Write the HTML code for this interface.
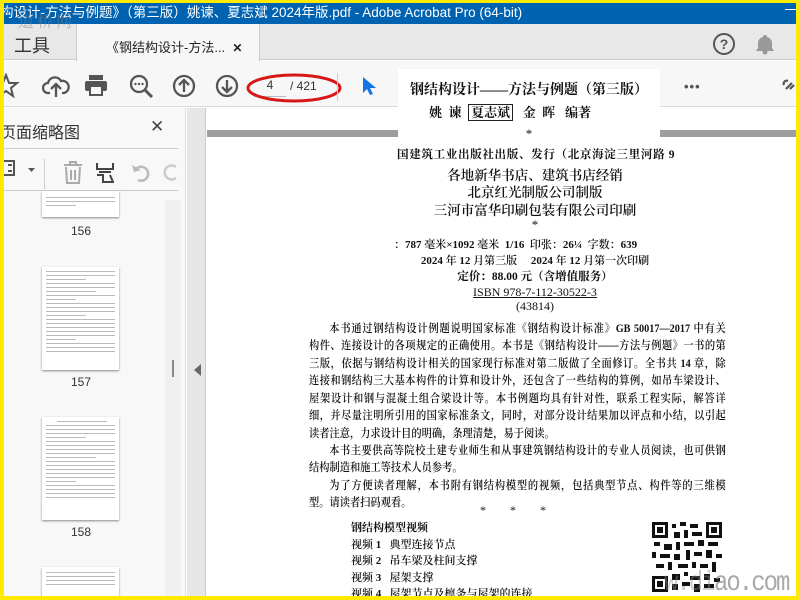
<!DOCTYPE html>
<html><head><meta charset="utf-8"><style>
*{margin:0;padding:0;box-sizing:border-box}
body{width:800px;height:600px;overflow:hidden;background:#ffeb00;position:relative;font-family:"Liberation Sans","Noto Sans CJK SC",sans-serif}
.a{position:absolute}
.ser{font-family:"Liberation Serif","Noto Serif CJK SC",serif;color:#111}
.c{text-align:center;white-space:nowrap}
.pl{position:absolute;left:305px;width:472px;font-size:11.6px;text-align:justify;text-align-last:justify;white-space:nowrap;line-height:16px;font-weight:600;transform:scaleX(0.883);transform-origin:0 0}
.pl.e{text-align-last:auto;text-align:left}
.vl{position:absolute;left:347px;font-size:11px;white-space:pre;font-weight:600}
.th{position:absolute;left:38px;width:77px;background:#fff;box-shadow:0 1px 2px #888}
.th i{display:block;height:1px;background:#bbb;margin:3px 4px}
.lab{position:absolute;left:60px;width:34px;text-align:center;font-size:12px;color:#333}
</style></head><body>
<div class="a" style="left:4px;top:3px;width:792px;height:593px;background:#fff;overflow:hidden">
 <div class="a" style="left:0;top:0;width:792px;height:21px;background:#0063b1;color:#fff;font-size:13.5px;line-height:20px;white-space:nowrap"><span style="margin-left:-4px">构设计-方法与例题》（第三版）姚谏、夏志斌 2024年版.pdf - Adobe Acrobat Pro (64-bit)</span></div>
 <div class="a" style="left:781px;top:6px;width:11px;height:1px;background:#fff"></div>
 <div class="a" style="left:0;top:21px;width:792px;height:36px;background:#e8e8e8;border-bottom:1px solid #ccc"></div>
 <div class="a" style="left:14px;top:6px;color:rgba(130,130,130,.5);font-size:16px;letter-spacing:3px;font-family:'Noto Serif CJK SC',serif">道桥网</div>
 <div class="a" style="left:10px;top:29px;font-size:18px;color:#333">工具</div>
 <div class="a" style="left:72px;top:21px;width:184px;height:37px;background:#f7f7f7;border-left:1px solid #ccc;border-right:1px solid #ccc"></div>
 <div class="a" style="left:102px;top:34px;font-size:13px;color:#222;white-space:nowrap">《钢结构设计-方法...&nbsp;&nbsp;<b style="font-size:12px">✕</b></div>
 <svg class="a" style="left:708px;top:29px" width="24" height="24"><circle cx="12" cy="12" r="10" fill="none" stroke="#555" stroke-width="2"/><text x="12" y="17" font-size="14" font-weight="bold" text-anchor="middle" fill="#555" font-family="Liberation Sans">?</text></svg>
 <svg class="a" style="left:751px;top:30px" width="20" height="22"><path d="M10 2a2 2 0 0 1 2 2 6 6 0 0 1 5 6v5l2 3H1l2-3v-5a6 6 0 0 1 5-6 2 2 0 0 1 2-2z" fill="#999"/><circle cx="10" cy="19" r="2.5" fill="#999"/></svg>
 <div class="a" style="left:0;top:58px;width:792px;height:46px;background:#f7f7f7;border-bottom:1px solid #d8d8d8"></div>
 <svg class="a" style="left:-8px;top:70px" width="30" height="28"><path d="M10 2l3 8h8l-6 5 2 8-7-5-7 5 2-8-6-5h8z" fill="none" stroke="#555" stroke-width="2"/></svg>
 <svg class="a" style="left:38px;top:70px" width="28" height="26"><path d="M8 20H6a5 5 0 0 1 0-10 7 7 0 0 1 13-2 6 6 0 0 1 3 12h-2M14 24V12M9 16l5-5 5 5" fill="none" stroke="#555" stroke-width="2.3"/></svg>
 <svg class="a" style="left:80px;top:71px" width="24" height="22"><rect x="5" y="1" width="14" height="5" fill="#555"/><rect x="1" y="7" width="22" height="10" rx="2" fill="#555"/><rect x="6" y="12" width="12" height="9" fill="#f7f7f7" stroke="#555" stroke-width="2"/></svg>
 <svg class="a" style="left:124px;top:70px" width="26" height="26"><circle cx="11" cy="11" r="8" fill="none" stroke="#555" stroke-width="2.3"/><path d="M17 17l7 7" stroke="#555" stroke-width="3"/><circle cx="7.5" cy="11" r="1.2" fill="#555"/><circle cx="11" cy="11" r="1.2" fill="#555"/><circle cx="14.5" cy="11" r="1.2" fill="#555"/></svg>
 <svg class="a" style="left:168px;top:71px" width="24" height="24"><circle cx="12" cy="12" r="10" fill="none" stroke="#555" stroke-width="2.3"/><path d="M12 18V6M7 11l5-5 5 5" fill="none" stroke="#555" stroke-width="2.3"/></svg>
 <svg class="a" style="left:211px;top:71px" width="24" height="24"><circle cx="12" cy="12" r="10" fill="none" stroke="#555" stroke-width="2.3"/><path d="M12 6v12M7 13l5 5 5-5" fill="none" stroke="#555" stroke-width="2.3"/></svg>
 <div class="a" style="left:250px;top:71px;width:32px;height:23px;border-bottom:1px solid #bbb;font-size:12px;text-align:center;line-height:22px;color:#333">4</div>
 <div class="a" style="left:286px;top:76px;font-size:12px;color:#333">/ 421</div>
 <svg class="a" style="left:240px;top:68px" width="100" height="36"><ellipse cx="50" cy="17" rx="46" ry="13" fill="none" stroke="#d81818" stroke-width="3"/></svg>
 <div class="a" style="left:333px;top:70px;width:1px;height:28px;background:#ccc"></div>
 <svg class="a" style="left:358px;top:73px" width="14" height="20"><path d="M1 1v16l4-4 3 6 3-1-3-6h6z" fill="#1473e6"/></svg>
 <div class="a" style="left:680px;top:76px;font-size:13px;color:#555;letter-spacing:1px;font-weight:bold">•••</div>
 <svg class="a" style="left:778px;top:72px" width="14" height="24"><path d="M4 14l6-6M2 10a3 3 0 0 1 4-4M12 10l-4 4" stroke="#555" stroke-width="2.2" fill="none"/></svg>
 <div class="a" style="left:0;top:105px;width:182px;height:488px;background:#f8f8f8;border-right:1px solid #ddd"></div>
 <div class="a" style="left:-4px;top:116px;font-size:16px;color:#333">页面缩略图</div>
 <div class="a" style="left:146px;top:114px;font-size:17px;color:#444">✕</div>
 <div class="a" style="left:0;top:145px;width:174px;height:1px;background:#ccc"></div>
 <svg class="a" style="left:0;top:156px" width="34" height="20"><path d="M0 2h10v14H0M4 6h4M4 12h4" stroke="#555" stroke-width="2" fill="none"/><path d="M24 9h7l-3.5 4z" fill="#555"/></svg>
 <div class="a" style="left:40px;top:156px;width:1px;height:30px;background:#ccc"></div>
 <svg class="a" style="left:58px;top:158px" width="22" height="24"><path d="M2 4h18M8 4V1h6v3M4 6l1 16h12l1-16M9 9v10M13 9v10" stroke="#aaa" stroke-width="2" fill="none"/></svg>
 <svg class="a" style="left:92px;top:158px" width="18" height="24"><path d="M1 2v6h16V2M3 11h12M1 14h6v7h10l-3-7" stroke="#444" stroke-width="2" fill="none"/></svg>
 <svg class="a" style="left:126px;top:158px" width="22" height="22"><path d="M6 8a7 7 0 1 1 2 11" stroke="#bbb" stroke-width="2.5" fill="none"/><path d="M2 4l2 7 7-2z" fill="#bbb"/></svg>
 <svg class="a" style="left:158px;top:158px" width="16" height="22"><path d="M14 6a7 7 0 1 0 0 11" stroke="#ccc" stroke-width="2.5" fill="none"/></svg>
 <div class="a" style="left:0;top:187px;width:174px;height:1px;background:#ccc"></div>
 <div class="th" style="top:188px;height:26px"><i style="margin-top:6px"></i><i></i><i style="width:30px"></i></div>
 <div class="lab" style="top:221px">156</div>
 <div class="th" style="top:264px;height:103px"><i style="margin-top:4px"></i><i></i><i style="width:40px"></i><i></i><i></i><i style="width:50px"></i><i></i><i style="width:30px"></i><i></i><i></i><i></i><i style="width:40px"></i><i></i><i></i><i></i><i></i><i></i><i style="width:30px"></i><i></i><i></i><i></i></div>
 <div class="lab" style="top:372px">157</div>
 <div class="th" style="top:414px;height:103px"><i style="margin-top:4px;width:50px;margin-left:15px"></i><i></i><i></i><i></i><i style="width:40px"></i><i></i><i></i><i></i><i></i><i style="width:50px"></i><i></i><i></i><i></i><i></i><i></i><i style="width:30px"></i><i></i><i></i><i></i><i></i></div>
 <div class="lab" style="top:522px">158</div>
 <div class="th" style="top:564px;height:30px"><i style="margin-top:5px"></i><i></i><i></i><i></i></div>
 <div class="a" style="left:161px;top:197px;width:16px;height:396px;background:#f0f0f0"></div>
 <div class="a" style="left:168px;top:357px;width:2px;height:17px;background:#888"></div>
 <div class="a" style="left:183px;top:105px;width:19px;height:488px;background:#e6e6e6;border-right:1px solid #ccc"></div>
 <div class="a" style="left:190px;top:361px;width:0;height:0;border-top:6px solid transparent;border-bottom:6px solid transparent;border-right:7px solid #666"></div>
 <div class="a" style="left:203px;top:105px;width:589px;height:488px;background:#fff"></div>
 <div class="a" style="left:203px;top:127px;width:589px;height:7px;background:#9e9e9e"></div>
 <div class="a" style="left:394px;top:66px;width:262px;height:80px;background:#fff"></div>
 <div class="a ser c" style="left:394px;top:76px;width:262px;font-size:14px;font-weight:bold">钢结构设计——方法与例题（第三版）</div>
 <div class="a ser" style="left:425px;top:99px;font-size:13px;white-space:pre;font-weight:bold">姚  谏  <span style="border:1px solid #222;padding:0 2px">夏志斌</span>   金  晖   编著</div>
 <div class="a ser c" style="left:394px;top:123px;width:262px;font-size:13px">*</div>
 <div class="a ser" style="left:393px;top:143px;font-size:11.6px;white-space:nowrap;font-weight:bold;letter-spacing:.6px">国建筑工业出版社出版、发行（北京海淀三里河路 9</div>
 <div class="a ser c" style="left:400px;top:161px;width:262px;font-size:13.5px;font-weight:600">各地新华书店、建筑书店经销</div>
 <div class="a ser c" style="left:400px;top:178px;width:262px;font-size:13.5px;font-weight:600">北京红光制版公司制版</div>
 <div class="a ser c" style="left:400px;top:196px;width:262px;font-size:13.5px;font-weight:600">三河市富华印刷包装有限公司印刷</div>
 <div class="a ser c" style="left:400px;top:214px;width:262px;font-size:13px">*</div>
 <div class="a ser" style="left:390px;top:233px;font-size:11px;white-space:pre;font-weight:600">：787 毫米×1092 毫米  1/16  印张：26¼  字数：639</div>
 <div class="a ser c" style="left:400px;top:249px;width:262px;font-size:11px;white-space:pre;font-weight:600">2024 年 12 月第三版     2024 年 12 月第一次印刷</div>
 <div class="a ser c" style="left:400px;top:265px;width:262px;font-size:11.5px;font-weight:bold">定价：88.00 元（含增值服务）</div>
 <div class="a ser c" style="left:400px;top:282px;width:262px;font-size:12px;text-decoration:underline">ISBN 978-7-112-30522-3</div>
 <div class="a ser c" style="left:400px;top:296px;width:262px;font-size:12px">(43814)</div>
 <div class="pl ser" style="top:318px;padding-left:23px">本书通过钢结构设计例题说明国家标准《钢结构设计标准》GB 50017—2017 中有关</div>
 <div class="pl ser" style="top:335px">构件、连接设计的各项规定的正确使用。本书是《钢结构设计——方法与例题》一书的第</div>
 <div class="pl ser" style="top:353px">三版，依据与钢结构设计相关的国家现行标准对第二版做了全面修订。全书共 14 章，除</div>
 <div class="pl ser" style="top:370px">连接和钢结构三大基本构件的计算和设计外，还包含了一些结构的算例，如吊车梁设计、</div>
 <div class="pl ser" style="top:388px">屋架设计和钢与混凝土组合梁设计等。本书例题均具有针对性，联系工程实际，解答详</div>
 <div class="pl ser" style="top:405px">细，并尽量注明所引用的国家标准条文，同时，对部分设计结果加以评点和小结，以引起</div>
 <div class="pl ser e" style="top:423px">读者注意，力求设计目的明确，条理清楚，易于阅读。</div>
 <div class="pl ser" style="top:440px;padding-left:23px">本书主要供高等院校土建专业师生和从事建筑钢结构设计的专业人员阅读，也可供钢</div>
 <div class="pl ser e" style="top:457px">结构制造和施工等技术人员参考。</div>
 <div class="pl ser" style="top:475px;padding-left:23px">为了方便读者理解，本书附有钢结构模型的视频，包括典型节点、构件等的三维模</div>
 <div class="pl ser e" style="top:492px">型。请读者扫码观看。</div>
 <div class="a ser" style="left:476px;top:500px;font-size:12px;white-space:pre">*        *        *</div>
 <div class="vl ser" style="top:516px;font-weight:bold">钢结构模型视频</div>
 <div class="vl ser" style="top:533px">视频 1   典型连接节点</div>
 <div class="vl ser" style="top:549px">视频 2   吊车梁及柱间支撑</div>
 <div class="vl ser" style="top:566px">视频 3   屋架支撑</div>
 <div class="vl ser" style="top:582px">视频 4   屋架节点及檩条与屋架的连接</div>
 <svg class="a" style="left:648px;top:519px" width="70" height="70">
  <rect width="70" height="70" fill="#fff"/>
  <g fill="#111">
   <rect x="0" y="0" width="16" height="16"/><rect x="54" y="0" width="16" height="16"/><rect x="0" y="54" width="16" height="16"/>
   <path d="M20 2h4v4h-4zM28 0h6v4h-6zM38 2h8v4h-8zM22 10h6v6h-6zM32 8h4v8h-4zM40 10h10v4h-10zM2 20h6v4h-6zM12 22h8v6h-8zM24 20h4v8h-4zM32 20h10v4h-10zM46 18h6v6h-6zM56 20h10v4h-10zM0 30h4v6h-4zM8 32h10v4h-10zM22 32h6v6h-6zM34 28h4v10h-4zM42 30h8v4h-8zM54 28h6v8h-6zM64 32h6v4h-6zM4 42h8v4h-8zM16 40h4v8h-4zM26 42h10v4h-10zM40 40h4v6h-4zM48 42h8v4h-8zM60 40h4v10h-4zM20 52h8v6h-8zM32 50h4v4h-4zM38 54h10v4h-10zM52 52h6v6h-6zM62 56h6v4h-6zM20 62h6v6h-6zM30 60h8v4h-8zM42 62h6v8h-6zM52 62h10v4h-10z"/>
  </g>
  <g fill="#fff"><rect x="3" y="3" width="10" height="10"/><rect x="57" y="3" width="10" height="10"/><rect x="3" y="57" width="10" height="10"/></g>
  <g fill="#111"><rect x="5" y="5" width="6" height="6"/><rect x="59" y="5" width="6" height="6"/><rect x="5" y="59" width="6" height="6"/></g>
 </svg>
 <div class="a" style="left:710px;top:567px;font-size:24px;color:rgba(140,140,140,.75);font-family:'Liberation Mono',monospace;letter-spacing:-2px;transform:scaleY(1.15)">ao.com</div>
 <div class="a" style="left:660px;top:567px;font-size:24px;color:rgba(140,140,140,.45);font-family:'Liberation Mono',monospace;letter-spacing:-2px;transform:scaleY(1.15)">w.di</div>
</div>
</body></html>
